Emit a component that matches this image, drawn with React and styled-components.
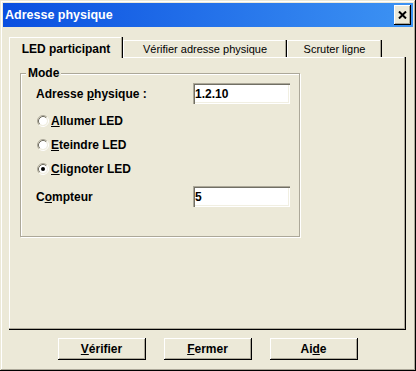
import React from "react";
import styled, { createGlobalStyle } from "styled-components";

const GlobalStyle = createGlobalStyle`
  html, body {
    margin: 0;
    padding: 0;
    background: #ece9d8;
  }
  body {
    font-family: "Liberation Sans", Arial, sans-serif;
    color: #000;
  }
`;

const Window = styled.div`
  width: 416px;
  height: 371px;
  box-sizing: border-box;
  padding: 3px;
  background: #ece9d8;
  display: flex;
  flex-direction: column;
  box-shadow: inset -1px -1px 0 #000, inset 1px 1px 0 #ece9d8,
    inset -2px -2px 0 #aca899, inset 2px 2px 0 #fff;
`;

const TitleBar = styled.div`
  height: 24px;
  display: flex;
  align-items: center;
  justify-content: space-between;
  padding: 0 2px;
  background: linear-gradient(to right, #0a4fe0, #3d93f3);
`;

const Title = styled.span`
  color: #fff;
  font-weight: bold;
  font-size: 12.5px;
`;

const CloseButton = styled.div`
  width: 17px;
  height: 20px;
  display: flex;
  align-items: center;
  justify-content: center;
  background: #ece9d8;
  box-shadow: inset -1px -1px 0 #000, inset 1px 1px 0 #fff,
    inset -2px -2px 0 #aca899;
`;

const Body = styled.div`
  flex: 1;
  display: flex;
  flex-direction: column;
  padding: 10px 7px 0 6px;
`;

const TabRow = styled.div`
  display: flex;
  align-items: flex-end;
  height: 20px;
`;

const Tab = styled.div`
  position: relative;
  box-sizing: border-box;
  width: ${(p) => p.$w}px;
  height: ${(p) => (p.$active ? 21 : 17)}px;
  margin-bottom: ${(p) => (p.$active ? -1 : 0)}px;
  z-index: ${(p) => (p.$active ? 1 : 0)};
  background: #ece9d8;
  display: flex;
  align-items: center;
  justify-content: center;
  padding-top: ${(p) => (p.$active ? 3 : 1)}px;
  font-size: ${(p) => (p.$active ? 12 : 11)}px;
  font-weight: ${(p) => (p.$active ? "bold" : "normal")};
  box-shadow: inset -1px 0 0 #000, inset -2px 0 0 #aca899,
    inset 1px 1px 0 #fff;
`;

const Panel = styled.div`
  height: 273px;
  box-sizing: border-box;
  padding: 16px 0 0 11px;
  box-shadow: inset -1px -1px 0 #000, inset -2px -2px 0 #aca899,
    inset 1px 1px 0 #fff;
`;

const Group = styled.div`
  position: relative;
  width: 280px;
  height: 164px;
  box-sizing: border-box;
  border: 1px solid #aca899;
  box-shadow: inset 1px 1px 0 #fff, 1px 1px 0 #fff;
  padding: 9px 0 0 15px;
`;

const GroupLabel = styled.span`
  position: absolute;
  top: -8px;
  left: 5px;
  padding: 0 2px;
  background: #ece9d8;
  font-size: 12px;
  font-weight: bold;
`;

const FieldRow = styled.div`
  display: flex;
  align-items: center;
  height: 21px;
  margin-top: ${(p) => p.$mt || 0}px;
`;

const FieldLabel = styled.span`
  width: 157px;
  font-size: 12px;
  font-weight: bold;
`;

const TextBox = styled.input`
  width: 97px;
  height: 21px;
  box-sizing: border-box;
  border: none;
  outline: none;
  margin: 0;
  padding: 1px 0 0 2px;
  background: #fff;
  font-family: "Liberation Sans", Arial, sans-serif;
  font-size: 12px;
  font-weight: bold;
  color: #000;
  box-shadow: inset 1px 1px 0 #aca899, inset 2px 2px 0 #716f64,
    inset -1px -1px 0 #fff, inset -2px -2px 0 #f1efe2;
`;

const RadioList = styled.div`
  margin-top: 5px;
  display: flex;
  flex-direction: column;
`;

const RadioRow = styled.label`
  display: flex;
  align-items: center;
  gap: 2px;
  height: 24px;
  padding-left: 1px;
  font-size: 12px;
  font-weight: bold;
`;

const U = styled.span`
  text-decoration: underline;
`;

const ButtonRow = styled.div`
  display: flex;
  justify-content: center;
  gap: 18px;
  margin-top: 8px;
`;

const Button = styled.div`
  width: 88px;
  height: 22px;
  display: flex;
  align-items: center;
  justify-content: center;
  font-size: 12px;
  font-weight: bold;
  background: #ece9d8;
  box-shadow: inset -1px -1px 0 #000, inset 1px 1px 0 #fff,
    inset -2px -2px 0 #aca899;
`;

function Radio({ checked }) {
  return (
    <svg width="12" height="12" viewBox="0 0 12 12">
      <circle cx="6" cy="6" r="4" fill="#fff" />
      <path d="M2.11 9.89 A5.5 5.5 0 0 1 9.89 2.11" fill="none" stroke="#aca899" />
      <path d="M9.89 2.11 A5.5 5.5 0 0 1 2.11 9.89" fill="none" stroke="#fff" />
      <path d="M2.82 9.18 A4.5 4.5 0 0 1 9.18 2.82" fill="none" stroke="#716f64" />
      <path d="M9.18 2.82 A4.5 4.5 0 0 1 2.82 9.18" fill="none" stroke="#f1efe2" />
      {checked && <circle cx="6" cy="6" r="2" fill="#000" />}
    </svg>
  );
}

function CloseIcon() {
  return (
    <svg width="9" height="8" viewBox="0 0 9 8">
      <path d="M1 0.5 L8 7.5 M8 0.5 L1 7.5" stroke="#000" strokeWidth="2" />
    </svg>
  );
}

const tabs = [
  { label: "LED participant", width: 114, active: true },
  { label: "Vérifier adresse physique", width: 164 },
  { label: "Scruter ligne", width: 95 },
];

export default function App() {
  return (
    <>
      <GlobalStyle />
      <Window>
        <TitleBar>
          <Title>Adresse physique</Title>
          <CloseButton>
            <CloseIcon />
          </CloseButton>
        </TitleBar>
        <Body>
          <TabRow>
            {tabs.map((t) => (
              <Tab key={t.label} $w={t.width} $active={t.active}>
                {t.label}
              </Tab>
            ))}
          </TabRow>
          <Panel>
            <Group>
              <GroupLabel>Mode</GroupLabel>
              <FieldRow>
                <FieldLabel>
                  Adresse <U>p</U>hysique :
                </FieldLabel>
                <TextBox readOnly value="1.2.10" />
              </FieldRow>
              <RadioList>
                <RadioRow>
                  <Radio />
                  <span><U>A</U>llumer LED</span>
                </RadioRow>
                <RadioRow>
                  <Radio />
                  <span><U>E</U>teindre LED</span>
                </RadioRow>
                <RadioRow>
                  <Radio checked />
                  <span><U>C</U>lignoter LED</span>
                </RadioRow>
              </RadioList>
              <FieldRow $mt={5}>
                <FieldLabel>
                  C<U>o</U>mpteur
                </FieldLabel>
                <TextBox readOnly value="5" />
              </FieldRow>
            </Group>
          </Panel>
          <ButtonRow>
            <Button><span><U>V</U>érifier</span></Button>
            <Button><span><U>F</U>ermer</span></Button>
            <Button><span>Ai<U>d</U>e</span></Button>
          </ButtonRow>
        </Body>
      </Window>
    </>
  );
}
